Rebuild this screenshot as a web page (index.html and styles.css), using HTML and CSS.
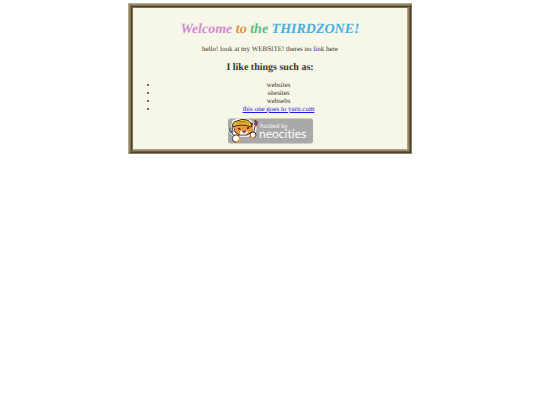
FILE: index.html
```html
<!DOCTYPE html>
<html lang="en">
<head>
  <meta charset="UTF-8">
  <meta name="viewport" content="width=device-width, initial-scale=1.0">
  <title>THIRDZONE</title>
  <link rel="stylesheet" href="styles.css">
</head>
<body>
  <div class="container">
    <h1><span class="pink">Welcome</span> <span class="orange">to</span> <span class="green">the</span> <span class="blue">THIRDZONE!</span></h1>
    <p>hello! look at my WEBSITE! theres no link here</p>
    <h2>I like things such as:</h2>
    <ul>
      <li>websites</li>
      <li>sitesites</li>
      <li>websebs</li>
      <li><a href="#">this one goes to yarn.com</a></li>
    </ul>
    <svg class="badge" viewBox="0 0 85 26" role="img" aria-label="hosted by neocities">
      <rect x="0" y="0.5" width="85" height="25" rx="2.5" fill="#a9a9a9"/>
      <!-- cat -->
      <path d="M4 9L5 3L10 1.500L17 1L23 3L25 8L27 10L25 15L20 18L10 18L5 14Z" fill="#fff" stroke="#fff" stroke-width="1.5"/>
      <path d="M5 8L7 14L11 17L19 17L24 14L26 9L24 5L7 5Z" fill="#f0963c" stroke="#3a2418" stroke-width="1"/>
      <path d="M12 14L14 12L18 12L20 14L18 16.500L12 16.500Z" fill="#fff4e4"/>
      <path d="M4.500 9Q4 3.500 9 3Q14 0 19 2Q24 4 23.500 9Q14 5 4.500 9Z" fill="#f0bd3a" stroke="#3a2a14" stroke-width="1"/>
      <path d="M8 5.500Q14 3 21 5.500M11 3.500L18 3.500" fill="none" stroke="#b67c20" stroke-width="0.8"/>
      <path d="M10 10L12.500 11.500M19 10.500L21 9.500" stroke="#302018" stroke-width="1.4"/>
      <path d="M14 13L18 12.500L16.500 15Z" fill="#b64237" stroke="#3d2720" stroke-width="0.6"/>
      <!-- fork and brush -->
      <path d="M1 10L2 14L4 15L5 13L4 9M2.500 9.500L3.500 14L7 20" fill="none" stroke="#fff" stroke-width="2.600"/>
      <path d="M1 10L2 14L4 15L5 13L4 9M2.500 9.500L3.500 14L7 20" fill="none" stroke="#4d5864" stroke-width="1.1"/>
      <path d="M27.500 4L26 15" stroke="#fff" stroke-width="3.500"/>
      <path d="M27 8L25.500 16" stroke="#584033" stroke-width="1.200"/>
      <path d="M27 2L29.500 4L28.500 8L26.500 7Z" fill="#a83440" stroke="#49252b" stroke-width="0.6"/>
      <circle cx="8" cy="20.500" r="3.700" fill="#fff" stroke="#453226" stroke-width="1"/>
      <path d="M8 24L12 22L11 18" fill="none" stroke="#eda04d" stroke-width="1.500"/>
      <circle cx="25" cy="17" r="3" fill="#fff" stroke="#453226" stroke-width="1"/>
      <path d="M22.500 18.500L25 20L27.500 18" fill="none" stroke="#eda04d" stroke-width="1.300"/>
      <text class="badge-small" x="32" y="10">hosted by</text>
      <text class="badge-name" x="31" y="20">neocities</text>
    </svg>
  </div>
</body>
</html>
```

FILE: styles.css
```css
body {
  margin: 0;
  padding: 3px 0;
  background: #fff;
  color: #3a3528;
  font-family: "Liberation Serif", "Times New Roman", serif;
  font-size: 7px;
  line-height: 8px;
  text-rendering: geometricPrecision;
}
.container {
  box-sizing: border-box;
  width: 52.6%;
  margin: 0 auto;
  padding: 17px 12px 9px;
  border: 1px solid;
  border-color: #b0a892 #8a8270 #8a8270 #b0a892;
  background: #f7f7e9;
  /* stepped wooden frame */
  box-shadow:
    inset 1px 1px #988a6a, inset -1px -1px #4d4228,
    inset 2px 2px #7f7050, inset -2px -2px #6b5c3e,
    inset 3px 3px #4d4228, inset -3px -3px #988a6a,
    inset 4px 4px #7a6d50, inset -4px -4px #b0a482;
  text-align: center;
}
h1 {
  margin: 0 0 7px;
  font-size: 14px;
  line-height: 17px;
  font-style: italic;
}
.pink {
  color: #d28bd0;
}
.orange {
  color: #df9143;
}
.green {
  color: #63ba7c;
}
.blue {
  color: #48aee0;
}
p {
  margin: 0 0 9px;
}
h2 {
  margin: 0 0 7px;
  font-size: 10px;
  line-height: 12px;
}
ul {
  margin: 0 0 5px;
  padding: 0 0 0 17px;
}
a {
  color: #1a1ae6;
}
.badge {
  display: block;
  width: 85px;
  margin: 0 auto;
}
.badge-small {
  fill: #fff;
  font-family: "Open Sans", sans-serif;
  font-size: 6px;
}
.badge-name {
  fill: #fff;
  font-family: Lato, sans-serif;
  font-size: 12px;
  font-variant-ligatures: none;
}
```
